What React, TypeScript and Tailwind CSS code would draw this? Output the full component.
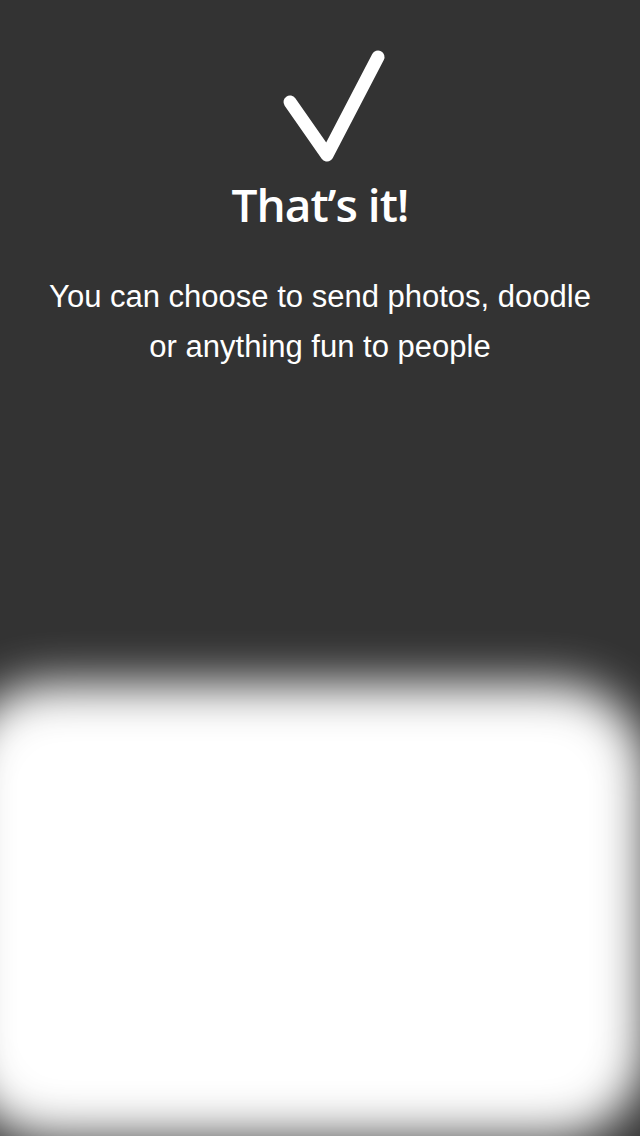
export default function App() {
  return (
    <div className="relative h-[1136px] w-[640px] overflow-hidden bg-[#333333] flex flex-col items-center">
      <svg
        className="mt-[44px]"
        width="140"
        height="124"
        viewBox="0 0 140 124"
        fill="none"
      >
        <path
          d="M40 58 L77 111 L128 13"
          stroke="#ffffff"
          strokeWidth="13"
          strokeLinecap="round"
          strokeLinejoin="round"
        />
      </svg>
      <h1
        className="mt-[8px] text-white text-[46px] leading-[56px] font-semibold tracking-[-1px]"
        style={{ fontFamily: '"Open Sans", sans-serif' }}
      >
        That’s it!
      </h1>
      <p
        className="mt-[40px] text-white text-center text-[31px] leading-[50px]"
        style={{ fontFamily: '"Liberation Sans", Arial, sans-serif' }}
      >
        You can choose to send photos, doodle
        <br />
        or anything fun to people
      </p>
      {/* blurred card glow at the bottom */}
      <div className="absolute left-[-40px] top-[684px] h-[454px] w-[686px] rounded-[90px] bg-white blur-[24px]" />
    </div>
  );
}
